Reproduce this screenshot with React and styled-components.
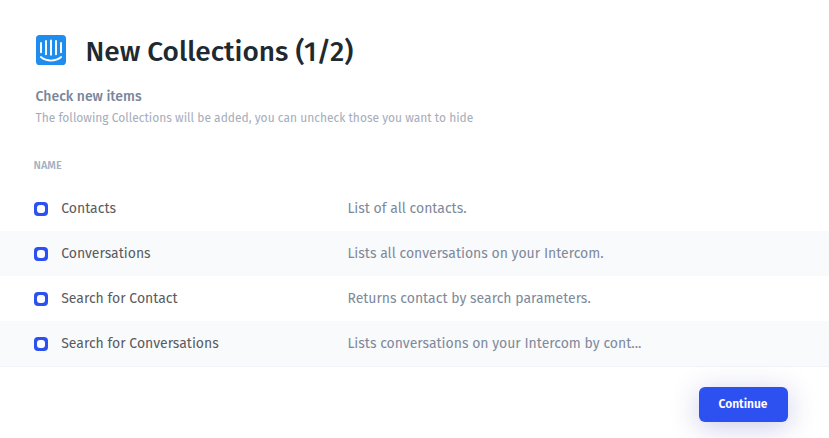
import React from "react";
import styled, { createGlobalStyle } from "styled-components";

const GlobalStyle = createGlobalStyle`
  * { box-sizing: border-box; }
  body {
    margin: 0;
    background: #fff;
    font-family: "Fira Sans", "Noto Sans", sans-serif;
    overflow: hidden;
  }
`;

const Page = styled.main`
  height: 438px;
  display: flex;
  flex-direction: column;
  overflow: hidden;
`;

const Header = styled.header`
  display: flex;
  align-items: center;
  gap: 19.5px;
  height: 30px;
  margin: 35px 36px 0;
`;

const Title = styled.h1`
  margin: 3px 0 0;
  font-size: 28px;
  font-weight: 500;
  line-height: 34px;
  white-space: nowrap;
  color: #212930;
`;

const Intro = styled.section`
  padding: 21px 35px 0 35.5px;
`;

const Subtitle = styled.h2`
  margin: 0;
  font-size: 14px;
  font-weight: 500;
  line-height: 21px;
  color: #7a869a;
`;

const Hint = styled.p`
  margin: 0;
  padding-top: 1px;
  font-size: 12px;
  line-height: 21px;
  color: #a5adba;
`;

const ColumnLabel = styled.div`
  height: 57px;
  padding: 29px 0 0 33.5px;
  font-size: 11px;
  font-weight: 500;
  line-height: 16px;
  color: #a3afbf;
`;

const List = styled.ul`
  margin: 0;
  padding: 0;
  list-style: none;
  border-bottom: 1px solid #f0f4f8;
`;

const Item = styled.li`
  display: grid;
  grid-template-columns: 14px 273px 310px;
  column-gap: 13.2px;
  align-items: center;
  height: 45px;
  padding-left: 34px;
  font-size: 14px;
  line-height: 20px;

  &:nth-child(even) {
    background: #f9fafc;
  }
`;

const Checkbox = styled.span`
  display: grid;
  place-items: center;
  width: 14px;
  height: 14px;
  margin-top: 1px;
  border-radius: 4px;
  background: #2d50f0;

  &::before {
    content: "";
    width: 8px;
    height: 8px;
    border-radius: 3px;
    background: #fff;
  }
`;

const Name = styled.span`
  color: #595b5e;
`;

const Description = styled.span`
  white-space: nowrap;
  color: #7e899b;
`;

const Footer = styled.footer`
  display: flex;
  justify-content: flex-end;
  padding: 20px 41px 0 0;
`;

const Button = styled.button`
  width: 89px;
  height: 35px;
  padding: 0 1px 1px 0;
  border: 0;
  border-radius: 6px;
  background: #2d50f0;
  box-shadow: 0 5px 28px rgba(45, 50, 170, 0.25);
  color: #fff;
  font-family: inherit;
  font-size: 12px;
  font-weight: 600;
`;

const collections = [
  { name: "Contacts", description: "List of all contacts." },
  { name: "Conversations", description: "Lists all conversations on your Intercom." },
  { name: "Search for Contact", description: "Returns contact by search parameters." },
  { name: "Search for Conversations", description: "Lists conversations on your Intercom by cont..." },
];

const IntercomLogo = () => (
  <svg width="30" height="30" viewBox="0 0 30 30" aria-label="Intercom">
    <rect width="30" height="30" rx="3.6" fill="#1f8ded" />
    <path
      d="M5 8v9.3M10 6v13.2M15 5.5v14.2M20 6v13.2M25 8v9.3M4.9 22.1c5.7 4.7 14.5 4.7 20.2 0"
      fill="none"
      stroke="#fff"
      strokeWidth="1.9"
      strokeLinecap="round"
    />
  </svg>
);

export default function App() {
  return (
    <Page>
      <GlobalStyle />
      <Header>
        <IntercomLogo />
        <Title>New Collections (1/2)</Title>
      </Header>
      <Intro>
        <Subtitle>Check new items</Subtitle>
        <Hint>The following Collections will be added, you can uncheck those you want to hide</Hint>
      </Intro>
      <ColumnLabel>NAME</ColumnLabel>
      <List>
        {collections.map(({ name, description }) => (
          <Item key={name}>
            <Checkbox role="checkbox" aria-checked="true" aria-label={name} />
            <Name>{name}</Name>
            <Description>{description}</Description>
          </Item>
        ))}
      </List>
      <Footer>
        <Button type="button">Continue</Button>
      </Footer>
    </Page>
  );
}
